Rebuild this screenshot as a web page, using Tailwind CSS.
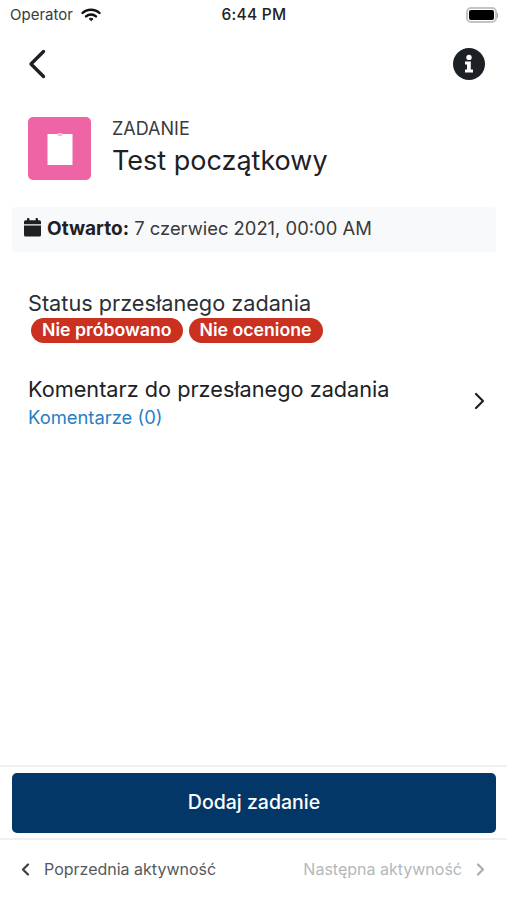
<!DOCTYPE html>
<html lang="pl">
<head>
  <meta charset="UTF-8" />
  <title>Test początkowy</title>
  <script src="https://cdn.jsdelivr.net/npm/@tailwindcss/browser@4"></script>
</head>
<body class="bg-white font-['Inter',sans-serif] text-[#1d2125]">
  <div class="flex flex-col h-[900px] w-[507px] overflow-hidden">

    <!-- Status bar -->
    <div class="flex items-center justify-between h-[30px] pl-[10px] pr-[9px] shrink-0">
      <div class="flex items-center gap-[8px] w-[160px] text-[15px] text-[#3a3a3c]">
        <span>Operator</span>
        <svg width="20" height="14" viewBox="0 0 20 14" fill="none" stroke="#111" stroke-linecap="round">
          <path d="M1.5 5 C6 .6 14 .6 18.5 5" stroke-width="2.4"/>
          <path d="M5 8.4 C7.8 5.9 12.2 5.9 15 8.4" stroke-width="2.4"/>
          <path d="M10 12.5 L8.2 10.8 C9.2 10 10.8 10 11.8 10.8 Z" fill="#111" stroke-width="1"/>
        </svg>
      </div>
      <span class="text-[15.5px] font-medium tracking-[0.3px] text-[#222]">6:44 PM</span>
      <div class="flex justify-end items-center w-[160px]">
        <div class="flex items-center justify-center w-[31px] h-[16px] rounded-[5px] border-2 border-[#c4c4c4] p-[1px]">
          <div class="w-full h-full bg-black rounded-[2px]"></div>
        </div>
        <div class="w-[1px] h-[5px] bg-[#aaa]"></div>
      </div>
    </div>

    <!-- Nav -->
    <div class="flex items-center justify-between h-[44px] mt-[12px] pl-[28px] pr-[22px] shrink-0">
      <svg width="18" height="30" viewBox="0 0 18 30" fill="none" stroke="#1d2125" stroke-width="3.4" stroke-linecap="round" stroke-linejoin="round">
        <path d="M15.5 2.5 L3 15 L15.5 27.5"/>
      </svg>
      <div class="relative flex items-center justify-center w-[32px] h-[32px] rounded-full bg-[#1d2125]">
        <svg width="10" height="20" viewBox="0 0 10 20" fill="white">
          <circle cx="5" cy="3.4" r="2.7"/>
          <path d="M1 7.6 H6.8 V15.4 H9 V18.4 H1 V15.4 H3 V10.6 H1 Z"/>
        </svg>
      </div>
    </div>

    <!-- Title -->
    <div class="flex items-center gap-[21px] pl-[28px] mt-[31px] shrink-0">
      <div class="flex items-center justify-center w-[63px] h-[63px] rounded-[5px] bg-[#ee64a4]">
        <svg width="26" height="32" viewBox="0 0 26 32" fill="white">
          <rect x="0.5" y="1" width="25" height="31" rx="0.5"/>
          <rect x="10.5" y="0" width="5" height="3" rx="1" fill="#f9c0da"/>
        </svg>
      </div>
      <div class="flex flex-col">
        <span class="text-[18px] leading-[20px] text-[#3a3a3c]">ZADANIE</span>
        <span class="text-[27px] leading-[36px] mt-[4px]">Test początkowy</span>
      </div>
    </div>

    <!-- Dates -->
    <div class="flex items-center h-[45px] ml-[12px] mr-[11px] mt-[27px] pl-[12px] bg-[#f8f9fa] rounded-[2px] shrink-0">
      <svg width="17" height="19" viewBox="0 0 17 19" fill="#1d2125" class="mt-[-5px]">
        <rect x="3" y="0" width="2.4" height="4" rx="0.8"/>
        <rect x="11.6" y="0" width="2.4" height="4" rx="0.8"/>
        <path d="M1.5 2.3 H15.5 A1.5 1.5 0 0 1 17 3.8 V6.2 H0 V3.8 A1.5 1.5 0 0 1 1.5 2.3 Z"/>
        <path d="M0 7.4 H17 V17 A1.5 1.5 0 0 1 15.5 18.5 H1.5 A1.5 1.5 0 0 1 0 17 Z"/>
      </svg>
      <span class="ml-[6px] text-[18.4px] text-[#3a3a3c]"><strong class="font-bold text-[19px] text-[#1d2125]">Otwarto:</strong> 7 czerwiec 2021, 00:00 AM</span>
    </div>

    <!-- Status -->
    <div class="pl-[28px] mt-[37px] shrink-0">
      <div class="text-[21.7px] leading-[28px] text-[#2b2f33]">Status przesłanego zadania</div>
      <div class="flex gap-[6px] ml-[3px] mt-[1px]">
        <span class="flex items-center h-[25px] px-[11px] rounded-full bg-[#ca3120] text-white text-[17.7px] font-semibold">Nie próbowano</span>
        <span class="flex items-center h-[25px] px-[11px] rounded-full bg-[#ca3120] text-white text-[17.7px] font-semibold">Nie ocenione</span>
      </div>
    </div>

    <!-- Comments -->
    <div class="flex items-center justify-between pl-[28px] pr-[22px] mt-[32px] shrink-0">
      <div>
        <div class="text-[21.7px] leading-[28px]">Komentarz do przesłanego zadania</div>
        <div class="text-[18.4px] leading-[26px] mt-[1px] text-[#2a7fc4]">Komentarze (0)</div>
      </div>
      <svg width="11" height="18" viewBox="0 0 11 18" fill="none" stroke="#1d2125" stroke-width="2.2" stroke-linecap="round" stroke-linejoin="round" class="mt-[-4px]">
        <path d="M2 2 L9 9 L2 16"/>
      </svg>
    </div>

    <!-- Footer -->
    <div class="mt-auto shrink-0">
      <div class="border-y-2 border-[#eef0f2] pt-[6px] pb-[5px] pl-[12px] pr-[11px]">
        <button class="w-full h-[60px] rounded-[5px] bg-[#033767] text-white text-[19.5px] font-medium">Dodaj zadanie</button>
      </div>
      <div class="flex items-center justify-between h-[60px] pb-[2px] pl-[21px] pr-[22px] text-[16px]">
        <div class="flex items-center gap-[14px] text-[#55595e]">
          <svg width="9" height="13" viewBox="0 0 9 13" fill="none" stroke="#3a3f44" stroke-width="2.2" stroke-linecap="round" stroke-linejoin="round"><path d="M7 1.5 L2 6.5 L7 11.5"/></svg>
          <span>Poprzednia aktywność</span>
        </div>
        <div class="flex items-center gap-[14px] text-[#b4b7ba]">
          <span>Następna aktywność</span>
          <svg width="9" height="13" viewBox="0 0 9 13" fill="none" stroke="#a9acaf" stroke-width="2.2" stroke-linecap="round" stroke-linejoin="round"><path d="M2 1.5 L7 6.5 L2 11.5"/></svg>
        </div>
      </div>
    </div>
  </div>
</body>
</html>
